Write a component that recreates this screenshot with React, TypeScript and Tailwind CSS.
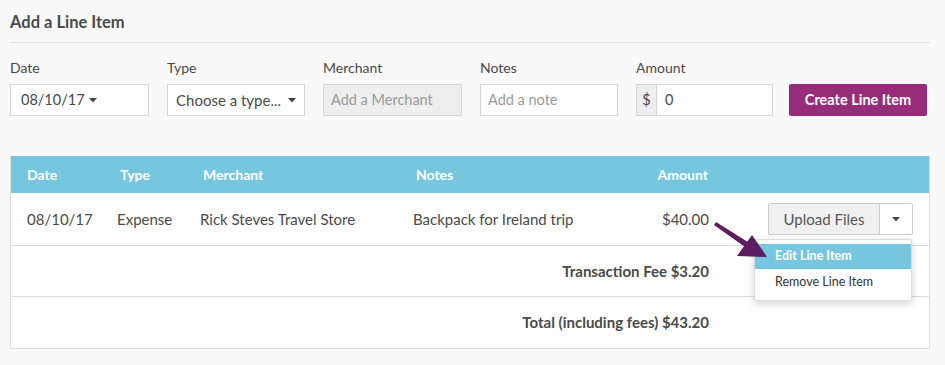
import React from "react";

function Caret() {
  return (
    <svg width="8" height="5" viewBox="0 0 8 5" className="inline-block">
      <path d="M0 0 H8 L4 4.5 Z" fill="#444" />
    </svg>
  );
}

const cols = "grid grid-cols-[93px_83px_213px_201px_122px_1fr]";

export default function App() {
  return (
    <div
      className="relative w-[945px] h-[365px] overflow-hidden bg-[#f9f9f9] text-[#4a4a4a] px-[10px]"
      style={{ fontFamily: "Lato, 'Open Sans', sans-serif" }}
    >
      {/* Header */}
      <h2 className="pt-[12px] text-[16.5px] font-bold leading-[20px] text-[#4a4a4a]">Add a Line Item</h2>
      <div className="mt-[10px] w-[920px] border-t border-[#dcdcdc]" />

      {/* Form row */}
      <div className="mt-[16px] flex items-end gap-[18px]">
        <div className="w-[139px]">
          <div className="text-[14px] leading-[18px] mb-[7px]">Date</div>
          <div className="h-[32px] border border-[#d4d4d4] bg-white flex items-center px-[10px] text-[14.5px] gap-[4px]">
            08/10/17 <Caret />
          </div>
        </div>
        <div className="w-[138px]">
          <div className="text-[14px] leading-[18px] mb-[7px]">Type</div>
          <div className="h-[32px] border border-[#d4d4d4] bg-white flex items-center justify-between px-[8px] text-[15px]">
            <span>Choose a type...</span>
            <Caret />
          </div>
        </div>
        <div className="w-[139px]">
          <div className="text-[14px] leading-[18px] mb-[7px]">Merchant</div>
          <div className="h-[32px] border border-[#d4d4d4] bg-[#eeeeee] flex items-center px-[7px] text-[14.5px] text-[#9a9a9a]">
            Add a Merchant
          </div>
        </div>
        <div className="w-[138px]">
          <div className="text-[14px] leading-[18px] mb-[7px]">Notes</div>
          <div className="h-[32px] border border-[#d4d4d4] bg-white flex items-center px-[7px] text-[14.5px] text-[#9a9a9a]">
            Add a note
          </div>
        </div>
        <div className="w-[137px]">
          <div className="text-[14px] leading-[18px] mb-[7px]">Amount</div>
          <div className="h-[32px] border border-[#d4d4d4] bg-white flex items-stretch text-[14.5px]">
            <span className="w-[20px] bg-[#eeeeee] border-r border-[#d4d4d4] flex items-center justify-center">$</span>
            <span className="flex items-center pl-[8px]">0</span>
          </div>
        </div>
        <button className="ml-[-2px] w-[138px] h-[32px] rounded-[2px] bg-[#972d78] text-white text-[14.5px] font-bold">
          Create Line Item
        </button>
      </div>

      {/* Table */}
      <div className="mt-[40px] w-[920px] border-x border-b border-[#dddddd] bg-white">
        <div className={`${cols} h-[37px] items-center bg-[#77c6e0] text-white font-bold text-[14px]`}>
          <div className="pl-[16px]">Date</div>
          <div className="pl-[16px]">Type</div>
          <div className="pl-[16px]">Merchant</div>
          <div className="pl-[16px]">Notes</div>
          <div className="pr-[15px] text-right">Amount</div>
          <div />
        </div>
        <div className={`${cols} h-[53px] items-center border-b border-[#dddddd] text-[15px]`}>
          <div className="pl-[16px]">08/10/17</div>
          <div className="pl-[13px]">Expense</div>
          <div className="pl-[13px]">Rick Steves Travel Store</div>
          <div className="pl-[13px]">Backpack for Ireland trip</div>
          <div className="pr-[14px] text-right">$40.00</div>
          <div className="flex justify-end pr-[16px]">
            <div className="flex h-[32px] border border-[#cccccc] rounded-[2px]">
              <span className="w-[111px] bg-[#f0f0f0] border-r border-[#cccccc] flex items-center justify-center text-[#555]">
                Upload Files
              </span>
              <span className="w-[32px] bg-white flex items-center justify-center">
                <Caret />
              </span>
            </div>
          </div>
        </div>
        <div className="flex h-[51px] items-center border-b border-[#dddddd] text-[15px]">
          <div className="w-[698px] text-right font-bold">Transaction Fee $3.20</div>
        </div>
        <div className="flex h-[51px] items-center text-[15px]">
          <div className="w-[698px] text-right font-bold">Total (including fees) $43.20</div>
        </div>
      </div>

      {/* Dropdown menu */}
      <div className="absolute left-[754px] top-[239px] w-[158px] bg-white border border-[#dddddd] rounded-[2px] shadow-[0_3px_8px_rgba(0,0,0,0.18)] py-[4px] text-[12.5px]">
        <div className="h-[25px] flex items-center pl-[20px] bg-[#77c6e0] text-white font-bold">Edit Line Item</div>
        <div className="h-[27px] flex items-center pl-[20px] text-[#333]">Remove Line Item</div>
      </div>

      {/* Annotation arrow */}
      <svg className="absolute left-[700px] top-[215px]" width="80" height="60" viewBox="0 0 80 60">
        <path d="M14 10 L16 7 L51 29 L48 34 Z" fill="#5c1c5f" />
        <path d="M67 42 L52 20 L37 41 Z" fill="#5c1c5f" />
      </svg>
    </div>
  );
}
